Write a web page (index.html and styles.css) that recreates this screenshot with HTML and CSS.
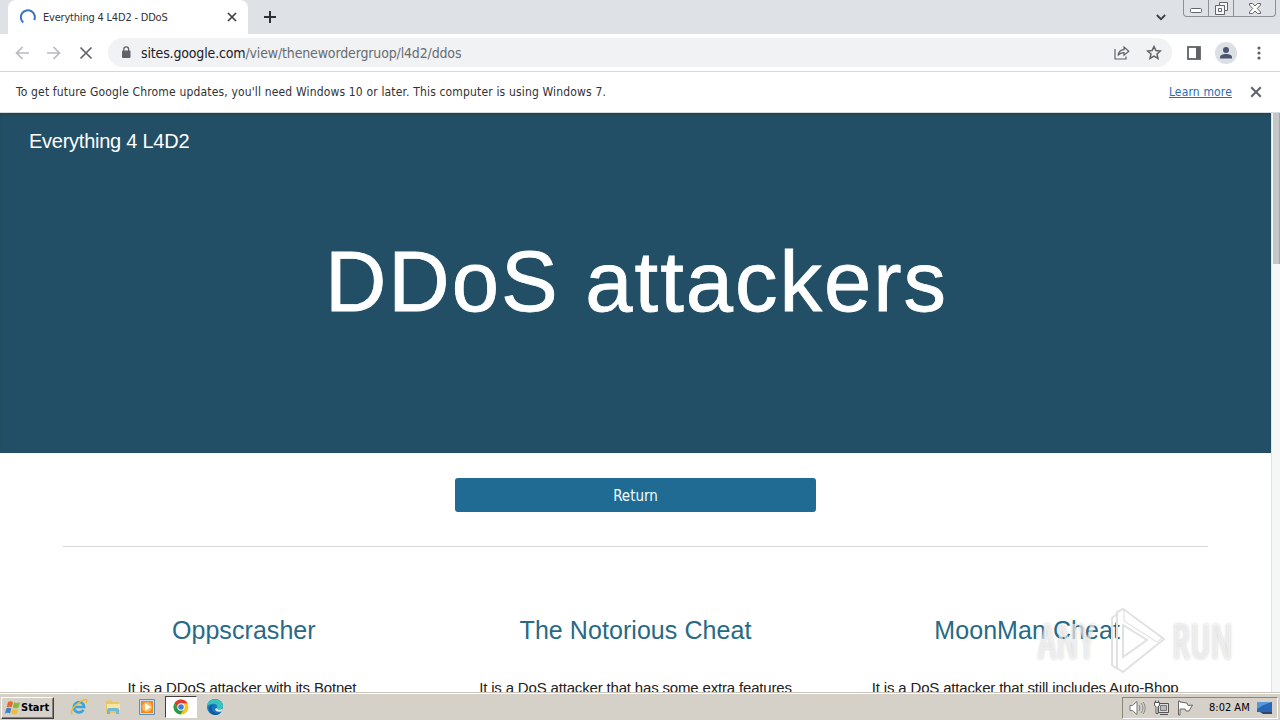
FILE: index.html
```html
<!DOCTYPE html>
<html lang="en">
<head>
    <meta charset="UTF-8">
    <meta name="viewport" content="width=device-width, initial-scale=1.0">
    <title>Everything 4 L4D2 - DDoS</title>
    <link rel="stylesheet" href="styles.css">
</head>
<body>
    <!-- Tab strip -->
    <div class="tab-strip">
        <div class="tab">
            <svg class="spinner" width="16" height="16" viewBox="0 0 16 16"><path d="M3.2 13.5A7 7 0 1 1 14.2 11.2" fill="none" stroke="#3973c6" stroke-width="2"/></svg>
            <span class="tab-title">Everything 4 L4D2 - DDoS</span>
            <svg class="tab-close" width="10" height="10" viewBox="0 0 10 10"><path d="M1 1l8 8M9 1L1 9" stroke="#3c4043" stroke-width="1.7"/></svg>
        </div>
        <svg class="new-tab" width="12" height="12" viewBox="0 0 12 12"><path d="M6 0v12M0 6h12" stroke="#2d3034" stroke-width="2"/></svg>
        <svg class="tab-search" width="10" height="7" viewBox="0 0 10 7"><path d="M.8 1L5 5.2 9.2 1" fill="none" stroke="#3c4043" stroke-width="1.8"/></svg>
        <div class="window-buttons">
            <span class="win-btn"><svg width="12" height="5" viewBox="0 0 12 5"><rect x=".5" y=".5" width="11" height="4" rx="1" fill="#fff" stroke="#62666c"/></svg></span>
            <span class="win-btn"><svg width="13" height="13" viewBox="0 0 13 13"><path d="M4.5 .5h8v8h-3v4h-9v-9h4z" fill="#f5f6f8" stroke="#62666c"/><path d="M4.5 3.5h5v5M3.5 6.5h3v3h-3z" fill="none" stroke="#62666c"/></svg></span>
            <span class="win-btn wide"><svg width="12" height="11" viewBox="0 0 12 11"><path d="M.5 .5h3L6 3 8.5 .5h3V2L8.3 5.5l3.2 3.5v1.5h-3L6 8l-2.500 2.500h-3V9l3.200-3.500L.5 2z" fill="#fff" stroke="#62666c"/></svg></span>
        </div>
    </div>

    <!-- Toolbar -->
    <div class="toolbar">
        <svg class="nav-icon" width="14" height="14" viewBox="0 0 14 14"><path d="M14 7H1.5M7.5 1l-6 6 6 6" fill="none" stroke="#b8babd" stroke-width="1.7"/></svg>
        <svg class="nav-icon" width="14" height="14" viewBox="0 0 14 14"><path d="M0 7h12.5M6.5 1l6 6-6 6" fill="none" stroke="#b8babd" stroke-width="1.7"/></svg>
        <svg class="nav-icon" width="14" height="14" viewBox="0 0 14 14"><path d="M1.5 1.5l11 11M12.5 1.5l-11 11" stroke="#5f6368" stroke-width="1.7"/></svg>
        <div class="address-bar">
            <svg class="lock" width="10" height="13" viewBox="0 0 10 13"><rect x="1" y="4.5" width="8.5" height="7.5" rx="1" fill="#5f6368"/><path d="M2.800 5V3.200a2.400 2.400 0 0 1 4.800 0V5" fill="none" stroke="#5f6368" stroke-width="1.3"/></svg>
            <span class="url"><span class="host">sites.google.com</span>/view/thenewordergruop/l4d2/ddos</span>
            <svg class="share" width="16" height="14" viewBox="0 0 16 14"><path d="M1 3v10h11v-2.500" fill="none" stroke="#5f6368" stroke-width="1.2"/><path d="M4 9.500C4.500 6 6.500 4 10 3.700V1l4.800 4.200L10 9.300V6.600C7.500 6.600 5.500 7.300 4 9.500z" fill="none" stroke="#5f6368" stroke-width="1.2"/></svg>
            <svg class="star" width="16" height="15" viewBox="0 0 16 15"><path d="M8 1.500l1.900 4.100 4.500.4-3.400 3 1 4.400L8 11.100l-4 2.300 1-4.400-3.400-3 4.500-.4z" fill="none" stroke="#5f6368" stroke-width="1.5"/></svg>
        </div>
        <svg class="side-panel" width="14" height="14" viewBox="0 0 14 14"><rect x="1" y="1" width="12" height="12" fill="none" stroke="#5f6368" stroke-width="1.8"/><path d="M9 1h4v12H9z" fill="#5f6368"/></svg>
        <svg class="avatar" width="22" height="22" viewBox="0 0 22 22"><circle cx="11" cy="11" r="11" fill="#dcdfe4"/><circle cx="11" cy="8" r="3" fill="#49566f"/><path d="M5 16.500v-1.200c0-2.200 3-3.300 6-3.300s6 1.100 6 3.300v1.200z" fill="#49566f"/></svg>
        <svg class="menu-dots" width="4" height="14" viewBox="0 0 4 14"><circle cx="2" cy="2" r="1.6" fill="#5f6368"/><circle cx="2" cy="7" r="1.6" fill="#5f6368"/><circle cx="2" cy="12" r="1.6" fill="#5f6368"/></svg>
    </div>

    <!-- Update notice -->
    <div class="infobar">
        <span class="notice">To get future Google Chrome updates, you'll need Windows 10 or later. This computer is using Windows 7.</span>
        <a class="learn-more" href="#">Learn more</a>
        <svg width="12" height="12" viewBox="0 0 12 12"><path d="M1.200 1.200l9.600 9.600M10.800 1.200l-9.600 9.600" stroke="#5f6368" stroke-width="2"/></svg>
    </div>

    <!-- Site content -->
    <div class="viewport">
        <main class="page">
            <header class="hero">
                <div class="site-name">Everything 4 L4D2</div>
                <h1>DDoS attackers</h1>
            </header>
            <a class="return-button" href="#">Return</a>
            <hr>
            <section class="cards">
                <article>
                    <h2>Oppscrasher</h2>
                    <p class="shifted">It is a DDoS attacker with its Botnet</p>
                </article>
                <article>
                    <h2>The Notorious Cheat</h2>
                    <p>It is a DoS attacker that has some extra features</p>
                </article>
                <article>
                    <h2>MoonMan Cheat</h2>
                    <p class="shifted">It is a DoS attacker that still includes Auto-Bhop</p>
                </article>
            </section>
        </main>
        <div class="scrollbar"><div class="thumb"></div></div>
        <div class="watermark">
            <span class="mark-word">ANY</span>
            <svg width="60" height="70" viewBox="0 0 60 70"><path d="M16 7v17l24 13-24 16v11l38-28z" fill="#fff" fill-opacity=".8"/><path d="M16 4l41 30-41 33-6-4V7zM16 20l24 15-24 17zM10 9L5 13v47l5 4" fill="none" stroke="#e1e1e1" stroke-width="2"/><path d="M17 5l38 28-5 4-33-21z" fill="#fff" stroke="#dcdcdc"/></svg>
            <span class="mark-word">RUN</span>
        </div>
    </div>

    <!-- Windows taskbar -->
    <div class="taskbar">
        <div class="start">
            <svg width="16" height="16" viewBox="0 0 16 16"><path d="M3 2q2.500-1.500 5 0L6.700 7.300q-2.500-1.300-5 0z" fill="#e8682c"/><path d="M9 2.300q2.500 1.400 6 0L13.500 7.500q-2.500 1.500-5.700 0z" fill="#84b840"/><path d="M1.300 8.500q2.500-1.300 5 0L5 13.500q-2.500-1.300-5 0z" fill="#3f80cc"/><path d="M7.500 8.700q2.500 1.300 5.700 0L12 13.700q-2.800 1.300-5.800 0z" fill="#f4bd30"/></svg>
            <span>Start</span>
        </div>
        <div class="quick-launch">
            <span class="task"><svg width="18" height="18" viewBox="0 0 18 18"><path d="M13.500 11.800A5.200 5.200 0 1 1 14.200 9H4.500" fill="none" stroke="#39a5dc" stroke-width="2.6"/><path d="M2.500 16C-1 15 4 7.500 10 3.800S18 1 16.200 5" fill="none" stroke="#e6b93b" stroke-width="1.4"/></svg></span>
            <span class="task"><svg width="18" height="18" viewBox="0 0 18 18"><path d="M2 3l5-1 1.500 2H15v11H2z" fill="#e8c766"/><path d="M3 6h13v6H3z" fill="#f7e6a3"/><path d="M3 16v-4q0-2 2-2h8q2 0 2 2v4h-3v-3H6v3z" fill="#72b8d6"/></svg></span>
            <span class="task"><svg width="18" height="18" viewBox="0 0 18 18"><path d="M1.500 1.500h15v15h-15z" fill="#c9def0" stroke="#5b91c0"/><path d="M3 3h12v12H3z" fill="#f18a16"/><circle cx="9" cy="9" r="5" fill="#fbb55c"/><path d="M7 5l6 4-6 4z" fill="#fff"/></svg></span>
            <span class="task active"><svg width="16" height="16" viewBox="0 0 16 16"><circle cx="8" cy="8" r="7.500" fill="#f9c51d"/><path d="M1.500 4.250A7.500 7.500 0 0 1 14.500 4.250H8L5 9.800z" fill="#df3b2f"/><path d="M1.500 4.250A7.500 7.500 0 0 0 7.500 15.500L11 10H5z" fill="#269b4c"/><circle cx="8" cy="8" r="3.700" fill="#fff"/><circle cx="8" cy="8" r="2.800" fill="#3d7de0"/></svg></span>
            <span class="task"><svg width="18" height="18" viewBox="0 0 18 18"><circle cx="9" cy="9" r="8" fill="#1678c2"/><path d="M1 9C1-1 17-1 17 8c0 4-5 4-6 2 1-3-2-5-5-4-3 .5-5 2-5 3z" fill="#38c2bc"/><path d="M7 7c-4 5 1 10 8 7-3 4-8 4-11 0-2-4 0-7 3-7z" fill="#14579d"/><path d="M11 10c1 2 4 2 6 0l-1 3c-4 2-7 0-7-2z" fill="#dce8ec"/></svg></span>
        </div>
        <div class="tray">
            <svg width="17" height="16" viewBox="0 0 17 16"><path d="M1 5.500h2.500L8 1.500v13l-4.500-4H1z" fill="#fff" stroke="#777"/><path d="M10 5q2 3 0 6M12 3q4 5 0 10M14.200 2q4 6 0 12" fill="none" stroke="#888"/></svg>
            <svg width="17" height="16" viewBox="0 0 17 16"><path d="M5.500 3.500h10v9h-10z" fill="#ddd" stroke="#555"/><path d="M7.500 5.500h6v5h-6z" fill="#bbb" stroke="#777"/><path d="M7 14.500h8" stroke="#555"/><path d="M1.500 2.500h5v3l-1.500 1v7H3v-7l-1.500-1zM2.500 .5v2M5.500 .5v2" fill="#fff" stroke="#555"/></svg>
            <svg width="17" height="16" viewBox="0 0 17 16"><path d="M1.500 1v14H3V9h5l1 2h3l3.500-6-4.500.5L10 3 3 2V1z" fill="#fff" stroke="#666"/></svg>
            <span class="clock">8:02 AM</span>
            <svg class="desktop" width="16" height="14" viewBox="0 0 16 14"><path d="M0 1h15v10H0z" fill="#2767b6"/><path d="M0 1h15q-8 2-15 7z" fill="#5997da"/><path d="M3 11h12v2H6z" fill="#30475f"/></svg>
        </div>
    </div>
</body>
</html>
```
FILE: styles.css
```css
* {
    box-sizing: border-box;
}

body {
    margin: 0;
    width: 1280px;
    height: 720px;
    display: flex;
    flex-direction: column;
    overflow: hidden;
    background-color: white;
    color: #303236;
    font-family: "DejaVu Sans Condensed", "DejaVu Sans", sans-serif;
    font-stretch: condensed;
}

svg {
    display: block;
    flex: none;
}

/* Tab strip */
.tab-strip {
    flex: none;
    height: 34px;
    display: flex;
    align-items: center;
    background-color: #dee1e6;
}

.tab {
    width: 240px;
    height: 34px;
    margin-left: 8px;
    padding: 0 11px 0 12px;
    display: flex;
    align-items: center;
    background-color: white;
    border-radius: 8px 8px 0 0;
}

.tab-title {
    margin-left: 7px;
    font-size: 11px;
    letter-spacing: -0.2px;
    white-space: nowrap;
}

.tab-close {
    margin-left: auto;
}

.new-tab {
    margin-left: 16px;
}

.tab-search {
    margin-left: auto;
    margin-right: 17px;
}

.window-buttons {
    align-self: flex-start;
    width: 93px;
    height: 17px;
    margin-right: 4px;
    display: flex;
    border: 1px solid #8d9197;
    border-top: none;
    border-radius: 0 0 4px 4px;
}

.win-btn {
    width: 25px;
    display: flex;
    align-items: center;
    justify-content: center;
    border-right: 1px solid #8d9197;
}

.win-btn:first-child {
    align-items: flex-end;
    padding-bottom: 3px;
}

.win-btn.wide {
    width: 41px;
    border-right: none;
}

/* Toolbar */
.toolbar {
    flex: none;
    height: 38px;
    padding-left: 15px;
    display: flex;
    align-items: center;
    border-bottom: 1px solid #d5d7da;
}

.nav-icon {
    margin-right: 18px;
}

.address-bar {
    width: 1064px;
    height: 29px;
    margin-left: -3px;
    padding: 0 10px 0 13px;
    display: flex;
    align-items: center;
    background-color: #f0f2f4;
    border-radius: 15px;
}

.url {
    margin-left: 10px;
    color: #686c71;
    font-size: 14px;
    letter-spacing: -0.15px;
    white-space: nowrap;
}

.host {
    color: #202124;
}

.share {
    margin-left: auto;
    margin-right: 16px;
}

.side-panel {
    margin-left: 15px;
}

.avatar {
    margin-left: 14px;
}

.menu-dots {
    margin-left: 20px;
}

/* Update notice */
.infobar {
    flex: none;
    height: 41px;
    padding: 0 18px 1px 16px;
    display: flex;
    align-items: center;
    border-bottom: 1px solid #d3dee2;
    font-size: 12px;
    letter-spacing: 0.16px;
}

.learn-more {
    margin-left: auto;
    margin-right: 18px;
    color: #2b6cb5;
}

/* Site content */
.viewport {
    position: relative;
    flex: 1;
    min-height: 0;
    display: flex;
    overflow: hidden;
    font-family: "Liberation Sans", Arial, sans-serif;
}

.page {
    width: 1271px;
}

.hero {
    height: 340px;
    padding-top: 16px;
    background-color: #224f65;
    box-shadow: inset 0 3px 3px -1px #2c414b;
    color: white;
}

.site-name {
    padding-left: 29px;
    font-size: 20px;
    letter-spacing: -0.25px;
    line-height: 24px;
}

h1 {
    margin: 76px 0 0;
    padding-left: 2px;
    font-size: 85px;
    font-weight: normal;
    letter-spacing: 2px;
    line-height: 105px;
    text-align: center;
    -webkit-text-stroke: 0.8px white;
}

.return-button {
    display: block;
    width: 361px;
    height: 34px;
    margin: 25px auto 34px;
    background-color: #1f6b93;
    border-radius: 3px;
    color: #f1ffff;
    font-family: "DejaVu Sans Condensed", sans-serif;
    font-size: 15px;
    font-weight: 200;
    line-height: 37px;
    text-align: center;
    text-decoration: none;
}

hr {
    height: 1px;
    margin: 0 63px;
    border: none;
    background-color: #d4d8d8;
}

.cards {
    margin: 65px 48px 0;
    display: grid;
    grid-template-columns: repeat(3, 1fr);
    text-align: center;
}

h2 {
    margin: 0;
    color: #266a86;
    font-size: 25px;
    font-weight: normal;
    letter-spacing: 0.06px;
    line-height: 36px;
}

.cards p {
    margin: 30px 0 0;
    color: #222;
    font-size: 15px;
    letter-spacing: -0.17px;
    line-height: 20px;
    white-space: nowrap;
}

.cards .shifted {
    padding-right: 4px;
}

.scrollbar {
    width: 9px;
    padding-left: 1px;
    background-color: #f5f6f6;
    border-left: 1px solid #e1e1e1;
}

.thumb {
    height: 151px;
    background-color: #c4c6c7;
    border-right: 1px solid #a4a7a8;
}

.watermark {
    position: absolute;
    left: 1038px;
    top: 492px;
    display: flex;
    align-items: center;
    gap: 5px;
    color: rgba(255, 255, 255, 0.6);
    font-family: "Open Sans", sans-serif;
    font-size: 49px;
    font-weight: 600;
    font-stretch: condensed;
    text-shadow: 0 0 3px rgba(120, 120, 120, 0.4);
}

.mark-word {
    width: 64px;
    transform: scaleX(0.77);
    transform-origin: left;
}

/* Windows taskbar */
.taskbar {
    flex: none;
    height: 28px;
    padding-bottom: 1px;
    display: flex;
    align-items: center;
    background-color: #d5d1c8;
    border-top: 1px solid #c9c5bc;
    box-shadow: inset 0 1px #fff;
}

.start {
    width: 53px;
    height: 22px;
    margin: 3px 0 0 1px;
    padding-left: 3px;
    display: flex;
    align-items: center;
    border: 1px solid;
    border-color: #fff #404040 #404040 #fff;
    box-shadow: inset -1px -1px #858179;
    color: black;
    font-size: 11px;
    font-weight: bold;
}

.quick-launch {
    margin: 2px 0 0 9px;
    display: flex;
    gap: 2px;
}

.task {
    width: 32px;
    height: 22px;
    display: flex;
    align-items: center;
    justify-content: center;
}

.task.active {
    background-color: white;
    border: 1px solid;
    border-color: #404040 #fff #fff #404040;
}

.tray {
    width: 156px;
    height: 22px;
    margin: 3px 2px 0 auto;
    padding-left: 6px;
    display: flex;
    align-items: center;
    gap: 7px;
    border: 1px solid;
    border-color: #8a867e #fff #fff #8a867e;
    color: black;
    font-size: 11px;
}

.clock {
    margin-left: 8px;
    white-space: nowrap;
}
```
